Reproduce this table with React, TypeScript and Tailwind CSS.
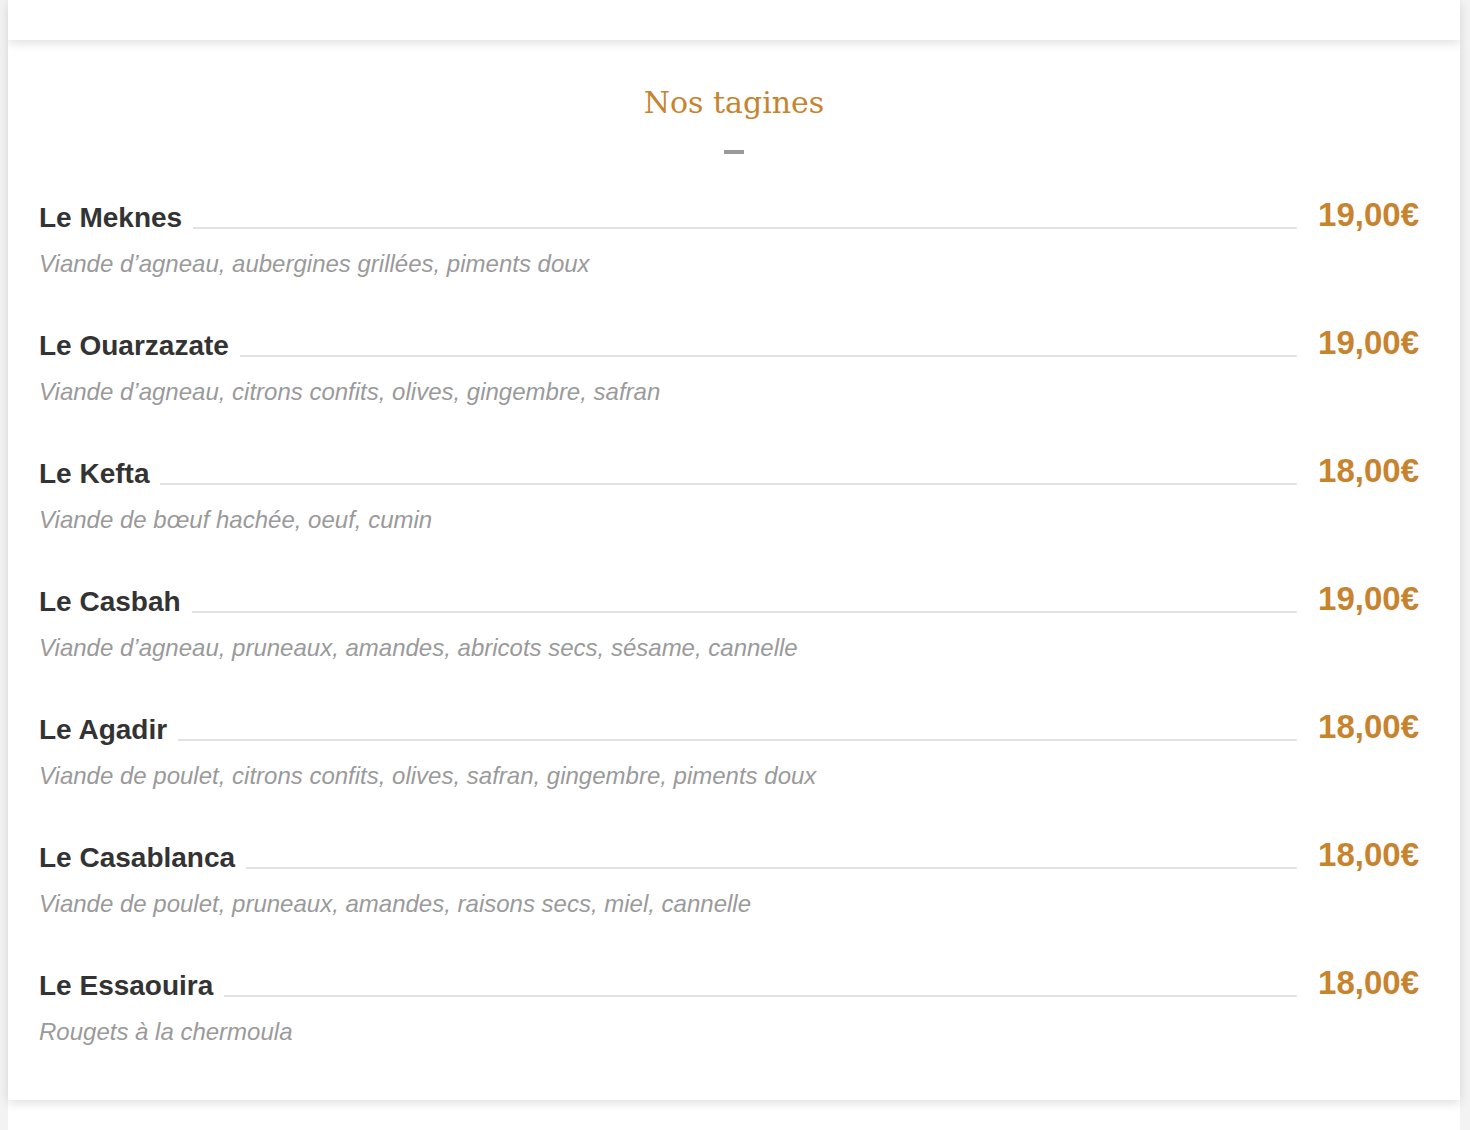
import React from "react";

type Dish = {
  name: string;
  description: string;
  price: string;
};

const dishes: Dish[] = [
  { name: "Le Meknes", description: "Viande d’agneau, aubergines grillées, piments doux", price: "19,00€" },
  { name: "Le Ouarzazate", description: "Viande d’agneau, citrons confits, olives, gingembre, safran", price: "19,00€" },
  { name: "Le Kefta", description: "Viande de bœuf hachée, oeuf, cumin", price: "18,00€" },
  { name: "Le Casbah", description: "Viande d’agneau, pruneaux, amandes, abricots secs, sésame, cannelle", price: "19,00€" },
  { name: "Le Agadir", description: "Viande de poulet, citrons confits, olives, safran, gingembre, piments doux", price: "18,00€" },
  { name: "Le Casablanca", description: "Viande de poulet, pruneaux, amandes, raisons secs, miel, cannelle", price: "18,00€" },
  { name: "Le Essaouira", description: "Rougets à la chermoula", price: "18,00€" },
];

const MenuItem = ({ dish }: { dish: Dish }) => (
  <div>
    <div className="flex items-start">
      <h3 className="text-[28px] leading-[32px] font-bold text-[#333333] whitespace-nowrap">{dish.name}</h3>
      <div className="flex-1 ml-[11px] mr-[21px] mt-[25px] border-b-2 border-[#e2e2e2]" />
      <span className="-mt-[3px] text-[33px] leading-[32px] font-bold text-[#c8832e] whitespace-nowrap">{dish.price}</span>
    </div>
    <p className="mt-4 text-[24px] leading-[28px] italic text-[#9a9a9a]">{dish.description}</p>
  </div>
);

export default function App() {
  return (
    <div className="min-h-[1130px] bg-[#f3f3f3] overflow-hidden" style={{ fontFamily: '"Liberation Sans", Arial, sans-serif' }}>
      <div className="ml-[8px] w-[1452px]">
        {/* previous section */}
        <div className="relative z-30 h-[40px] bg-white shadow-[0_3px_10px_rgba(0,0,0,0.13)]" />

        {/* tagines */}
        <section className="relative z-20 bg-white pt-[45px] pb-[54px] shadow-[0_3px_10px_rgba(0,0,0,0.13)]">
          <h2
            className="text-center text-[30px] leading-[36px] text-[#c8832e]"
            style={{ fontFamily: '"DejaVu Serif", serif' }}
          >
            Nos tagines
          </h2>
          <div className="mx-auto mt-[29px] h-[4px] w-[20px] bg-[#999999]" />
          <div className="mt-[48px] pl-[31px] pr-[41px] flex flex-col gap-[52px]">
            {dishes.map((dish) => (
              <MenuItem key={dish.name} dish={dish} />
            ))}
          </div>
        </section>

        {/* next section */}
        <div className="relative z-10 h-[40px] bg-white" />
      </div>
    </div>
  );
}
